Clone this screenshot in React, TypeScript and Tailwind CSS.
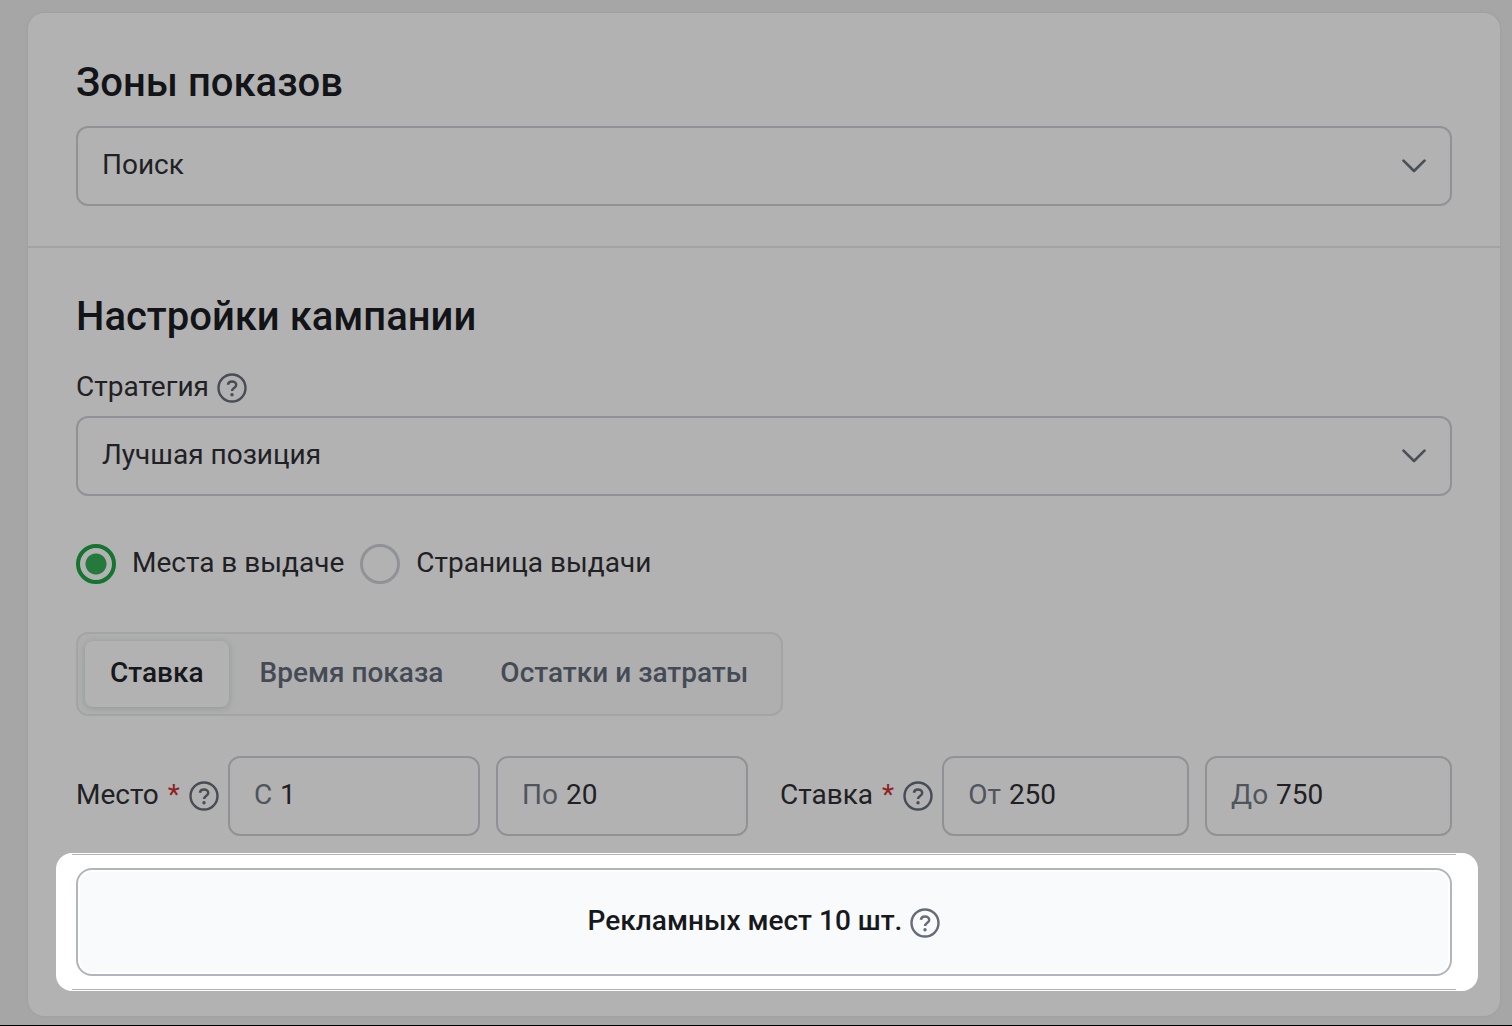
import { useState } from 'react'

const TABS = ['Ставка', 'Время показа', 'Остатки и затраты']

const PLACE_MODES = [
  { id: 'places', label: 'Места в выдаче' },
  { id: 'page', label: 'Страница выдачи' },
]

function HelpIcon() {
  return (
    <svg viewBox="0 0 30 30" className="size-[30px] shrink-0" fill="none" stroke="currentColor" aria-hidden="true">
      <circle cx="15" cy="15" r="13.5" strokeWidth="2.4" />
      <path d="M10.9 11.8C11.2 9.7 12.9 8.4 15 8.4c2.4 0 4.2 1.5 4.2 3.6 0 3-4.2 3.2-4.2 6" strokeWidth="2.5" />
      <circle cx="15" cy="21.7" r="1.7" fill="currentColor" stroke="none" />
    </svg>
  )
}

interface SelectProps {
  label: string
  options: string[]
}

function SelectField({ label, options }: SelectProps) {
  return (
    <div className="relative">
      <select
        aria-label={label}
        className="block h-20 w-full appearance-none rounded-xl border-2 border-[#909296] bg-transparent px-6 pb-0.5 text-[28px] text-[#1f2125] focus:outline-none"
      >
        {options.map(o => (
          <option key={o}>{o}</option>
        ))}
      </select>
      <svg
        viewBox="0 0 24 14"
        className="pointer-events-none absolute top-[33px] right-[26px] h-[14px] w-6 text-[#4a5057]"
        fill="none"
        stroke="currentColor"
        strokeWidth="2.7"
        strokeLinecap="round"
        strokeLinejoin="round"
        aria-hidden="true"
      >
        <path d="M1.5 1.6 12 12 22.5 1.6" />
      </svg>
    </div>
  )
}

interface RangeProps {
  label: string
  fields: { prefix: string; value: string }[]
}

function RangeField({ label, fields }: RangeProps) {
  return (
    <div role="group" aria-label={label} className="flex items-center gap-[9px]">
      <span className="flex gap-[9px] pb-0.5 whitespace-nowrap">
        {label} <span className="text-[#8f2226]">*</span>
      </span>
      <button type="button" aria-label={`Подсказка: ${label}`} className="text-[#484d55]">
        <HelpIcon />
      </button>
      <div className="flex min-w-0 flex-1 gap-4">
        {fields.map(f => (
          <label
            key={f.prefix}
            className="flex h-20 min-w-0 flex-1 items-center gap-2 rounded-xl border-2 border-[#909296] px-6 pb-0.5"
          >
            <span className="text-[#50555d]">{f.prefix}</span>
            <input type="text" defaultValue={f.value} className="w-full min-w-0 flex-1 bg-transparent focus:outline-none" />
          </label>
        ))}
      </div>
    </div>
  )
}

export default function App() {
  const [tab, setTab] = useState(TABS[0])
  const [mode, setMode] = useState('places')

  return (
    <main className="min-h-screen border-b border-black bg-[#a6a6a6] pt-[13px] pr-3 pb-2 pl-7 font-['Roboto','Liberation_Sans',sans-serif] text-[28px] leading-10 text-[#1f2125]">
      <div className="rounded-2xl bg-[#b2b2b2] shadow-[0_0_2px_1px_#a0a0a0]">
        {/* Zones */}
        <section className="border-b-2 border-[#a3a3a3] px-12 pt-[50px] pb-10">
          <h2 className="mb-[23px] text-[40px] leading-10 font-medium text-[#121418]">Зоны показов</h2>
          <SelectField label="Зоны показов" options={['Поиск']} />
        </section>

        {/* Campaign settings */}
        <section className="px-12 pt-[49px] pb-[25px]">
          <h2 className="mb-[30px] text-[40px] leading-10 font-medium text-[#121418]">Настройки кампании</h2>
          <div className="mb-[7px] flex items-center gap-2">
            <span className="pb-0.5">Стратегия</span>
            <button type="button" aria-label="Подсказка: Стратегия" className="text-[#484d55]">
              <HelpIcon />
            </button>
          </div>
          <SelectField label="Стратегия" options={['Лучшая позиция']} />

          <div className="mt-[47px] flex gap-4">
            {PLACE_MODES.map(m => (
              <label key={m.id} className="flex items-center gap-4">
                <input
                  type="radio"
                  name="mode"
                  checked={mode === m.id}
                  onChange={() => setMode(m.id)}
                  className="size-10 shrink-0 appearance-none rounded-full border-3 border-[#909296] checked:border-4 checked:border-[#15742f] checked:bg-[radial-gradient(circle,#25793d_10px,transparent_11px)]"
                />
                <span className="pb-0.5">{m.label}</span>
              </label>
            ))}
          </div>

          {/* Tabs */}
          <div role="tablist" className="mt-[47px] flex w-fit gap-[5px] rounded-xl border-2 border-[#a2a4a5] bg-[#afafaf] p-[7px]">
            {TABS.map(t => (
              <button
                key={t}
                type="button"
                role="tab"
                aria-selected={tab === t}
                onClick={() => setTab(t)}
                className={`h-[66px] rounded-lg pb-0.5 font-medium ${
                  tab === t
                    ? 'bg-[#b2b2b2] px-[25px] text-[#16181c] shadow-[0_1px_6px_1px_#989b9b]'
                    : 'px-[26px] text-[#444b55]'
                }`}
              >
                {t}
              </button>
            ))}
          </div>

          <div className="mt-10 grid grid-cols-2 gap-8">
            <RangeField label="Место" fields={[{ prefix: 'С', value: '1' }, { prefix: 'По', value: '20' }]} />
            <RangeField label="Ставка" fields={[{ prefix: 'От', value: '250' }, { prefix: 'До', value: '750' }]} />
          </div>

          {/* Highlighted summary */}
          <div className="-mr-[26px] -ml-5 mt-[17px] rounded-2xl bg-white py-px">
            <div className="mr-[22px] ml-4 h-px bg-[#b2b2b2]" />
            <div className="mt-[13px] mr-[26px] mb-[13px] ml-5 flex h-[108px] items-center justify-center gap-2 rounded-2xl border-2 border-[#b1b5be] bg-[#f9fafc] text-[#16181c] shadow-[inset_0_0_0_2px_#ffffff]">
              <span className="pb-0.5 font-medium">Рекламных мест 10 шт.</span>
              <button type="button" aria-label="Подсказка: Рекламных мест" className="pt-0.5 text-[#666d77]">
                <HelpIcon />
              </button>
            </div>
            <div className="mr-[22px] ml-4 h-px bg-[#b2b2b2]" />
          </div>
        </section>
      </div>
    </main>
  )
}
